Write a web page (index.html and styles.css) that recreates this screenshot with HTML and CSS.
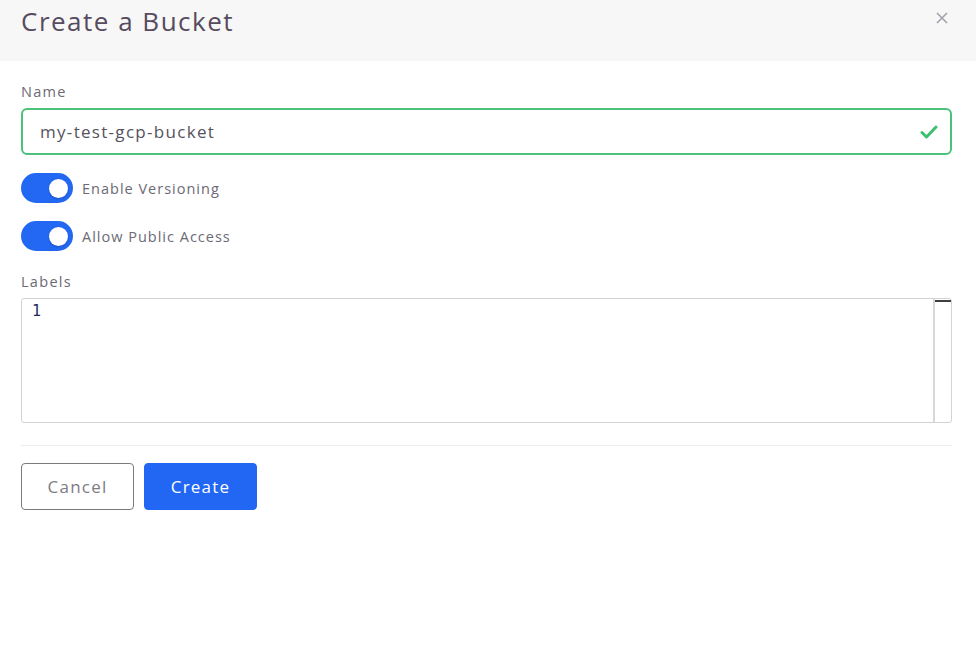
FILE: index.html
```html
<!DOCTYPE html>
<html>
<head>
<meta charset="utf-8">
<link rel="stylesheet" href="styles.css">
</head>
<body>
<div class="modal">
  <header class="head">
    <h1 class="title">Create a Bucket</h1>
    <button class="close" aria-label="Close">
      <svg width="12" height="12" viewBox="0 0 12 12"><path d="M1 1L11 11M11 1L1 11" stroke="#a3a1ae" stroke-width="1.6" fill="none"/></svg>
    </button>
  </header>
  <main class="body">
    <div class="field">
      <label class="label">Name</label>
      <div class="input valid">
        <span class="value">my-test-gcp-bucket</span>
        <svg class="check" width="18" height="14" viewBox="0 0 18 14"><path d="M2 7.5L6.5 12L16 2" stroke="#3cbf6e" stroke-width="3" fill="none" stroke-linecap="round" stroke-linejoin="round"/></svg>
      </div>
    </div>
    <div class="toggle-row">
      <span class="switch on"><span class="knob"></span></span>
      <span class="toggle-label">Enable Versioning</span>
    </div>
    <div class="toggle-row">
      <span class="switch on"><span class="knob"></span></span>
      <span class="toggle-label">Allow Public Access</span>
    </div>
    <div class="field labels">
      <label class="label">Labels</label>
      <div class="editor">
        <div class="code"><span class="line">1</span></div>
        <div class="scroll"><span class="thumb"></span></div>
      </div>
    </div>
    <hr class="divider">
    <div class="actions">
      <button class="btn cancel">Cancel</button>
      <button class="btn primary">Create</button>
    </div>
  </main>
</div>
</body>
</html>
```
FILE: styles.css
```css
* { box-sizing: border-box; }
html, body { margin: 0; padding: 0; background: #fff; }
body { font-family: "Open Sans", "Noto Sans", sans-serif; width: 976px; height: 661px; overflow: hidden; }

.head {
  background: #f7f7f7;
  height: 61px;
  display: flex;
  justify-content: space-between;
  align-items: flex-start;
  padding: 0 28px 0 21px;
}
.title {
  margin: 3px 0 0;
  font-size: 26px;
  font-weight: 400;
  color: #564b5f;
  letter-spacing: 1.5px;
  line-height: 36px;
}
.close {
  border: 0;
  background: none;
  padding: 0;
  margin-top: 12px;
  width: 12px;
  height: 12px;
  display: flex;
}

.body { padding: 23px 24px 0 21px; display: flex; flex-direction: column; }
.field { display: flex; flex-direction: column; }
.label {
  font-size: 14.5px;
  color: #6c6a75;
  line-height: 20px;
  height: 26px;
  margin-top: -2px;
  letter-spacing: 1.3px;
}
.input {
  height: 47px;
  border: 2px solid #4cc17c;
  border-radius: 6px;
  display: flex;
  align-items: center;
  justify-content: space-between;
  padding: 0 12px 0 17px;
}
.value { font-size: 17px; color: #56525e; letter-spacing: 1.3px; }
.check { margin-top: 1px; }

.toggle-row { display: flex; align-items: center; gap: 9px; margin-top: 18px; }
.switch {
  width: 52px; height: 30px; border-radius: 15px;
  background: #2368f3;
  display: flex; align-items: center; justify-content: flex-end;
  padding-right: 5px;
}
.knob {
  width: 19px; height: 19px; border-radius: 50%; background: #fff;
  box-shadow: 0 1px 2px rgba(0,0,0,0.2);
}
.toggle-label { font-size: 14.5px; color: #6c6a75; letter-spacing: 1px; }

.labels { margin-top: 23px; }
.labels .label { height: 26px; }
.editor {
  height: 125px;
  border: 1px solid #d3d3d3;
  border-radius: 3px;
  display: flex;
}
.code { flex: 1; padding: 0 10px; }
.line { font-family: "DejaVu Sans Mono", monospace; font-size: 15px; color: #1d2b5c; line-height: 20px; }
.scroll {
  width: 18px;
  border-left: 2px solid #d8d8d8;
  position: relative;
}
.thumb {
  position: absolute; top: 1px; left: 0; width: 16px; height: 2px; background: #3f3f3f;
}

.divider { border: 0; border-top: 1px solid #ececec; margin: 22px 0 0; }
.actions { display: flex; gap: 10px; margin-top: 17px; }
.btn {
  height: 47px; width: 113px; border-radius: 4px;
  font-family: "Open Sans", "Noto Sans", sans-serif;
  font-size: 17px;
  letter-spacing: 1.2px;
}
.cancel { background: #fff; border: 1px solid #7b7b7b; color: #7d7b84; }
.primary { background: #2167f3; border: 1px solid #2167f3; color: #fff; font-weight: 500; }
```
